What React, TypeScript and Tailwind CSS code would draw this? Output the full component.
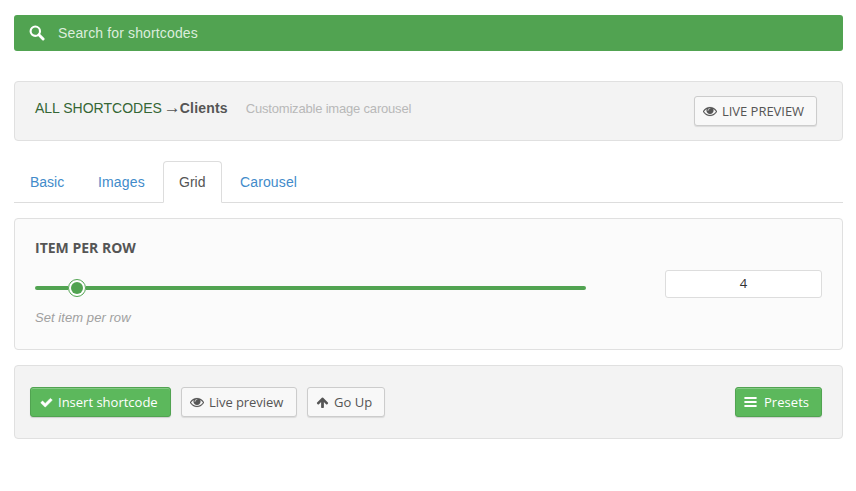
import React from "react";

const paths = {
  eye: "M1664 960q-152-236-381-353 61 104 61 225 0 185-131.5 316.5t-316.5 131.5-316.5-131.5-131.5-316.5q0-121 61-225-229 117-381 353 133 205 333.5 326.5t434.5 121.5 434.5-121.5 333.5-326.5zm-720-384q0-20-14-34t-34-14q-125 0-214.5 89.5t-89.5 214.5q0 20 14 34t34 14 34-14 14-34q0-86 61-147t147-61q20 0 34-14t14-34zm848 384q0 34-20 69-140 230-376.5 368.5t-499.5 138.5-499.5-139-376.5-368q-20-35-20-69t20-69q140-229 376.5-368t499.5-139 499.5 139 376.5 368q20 35 20 69z",
  check:
    "M1671 566q0 40-28 68l-724 724-136 136q-28 28-68 28t-68-28l-136-136-362-362q-28-28-28-68t28-68l136-136q28-28 68-28t68 28l294 295 656-657q28-28 68-28t68 28l136 136q28 28 28 68z",
  up: "M1675 971q0 51-37 90l-75 75q-38 38-91 38-54 0-90-38l-294-293v704q0 52-37.5 84.5t-90.5 32.5h-128q-53 0-90.5-32.5t-37.5-84.5v-704l-294 293q-36 38-90 38t-90-38l-75-75q-38-38-38-90 0-53 38-91l651-651q35-37 90-37 54 0 91 37l651 651q37 39 37 91z",
};

function Icon({ name, className = "" }: { name: keyof typeof paths; className?: string }) {
  return (
    <svg viewBox="0 0 1792 1792" fill="currentColor" stroke="currentColor" className={`shrink-0 ${className}`}>
      <path d={paths[name]} />
    </svg>
  );
}

function SearchIcon() {
  return (
    <svg viewBox="0 0 16 16" fill="none" stroke="currentColor" className="size-4 shrink-0">
      <circle cx="6.3" cy="6.2" r="4.7" strokeWidth="2.1" />
      <path d="M9.9 9.8L14.1 14" strokeWidth="2.9" strokeLinecap="round" />
    </svg>
  );
}

function BarsIcon() {
  return (
    <svg viewBox="0 0 13 14" fill="currentColor" className="mr-[7px] -ml-px h-[14px] w-[13px] shrink-0">
      <rect x="0.4" y="1.9" width="12.2" height="2.2" rx="0.5" />
      <rect x="0.4" y="5.9" width="12.2" height="2.2" rx="0.5" />
      <rect x="0.4" y="9.9" width="12.2" height="2.2" rx="0.5" />
    </svg>
  );
}

const buttonBase =
  "flex h-[30px] items-center rounded-[3px] border pl-[9px] font-['Open_Sans',sans-serif] text-[13px] whitespace-nowrap";
const plain = "border-[#ccc] bg-[#f8f8f8] text-[#555] shadow-[0_1px_1px_rgba(0,0,0,0.1)]";
const green =
  "border-[#51a351] bg-[#5cb85c] text-white shadow-[inset_0_1px_0_rgba(255,255,255,0.25),0_1px_1px_rgba(0,0,0,0.15)]";

export default function App() {
  return (
    <div className="h-[491px] w-[856px] bg-white pt-[15px] pr-[13px] pl-[14px] font-['Liberation_Sans',Arial,sans-serif] text-sm">
      <div className="flex h-9 items-center rounded-[3px] bg-[#51a351] pl-[15px] text-white">
        <SearchIcon />
        <span className="ml-[13px] tracking-[0.14px] text-[#dceddc]">Search for shortcodes</span>
      </div>

      <header className="mt-[30px] flex h-[60px] items-start rounded border border-[#e0e0e0] bg-[#f3f3f3] pt-[14px] pr-[25px] pl-5">
        <div className="flex pt-[2px] leading-5">
          <a className="text-[#356635]">ALL SHORTCODES</a>
          <span className="mr-[-1px] ml-[2px] w-[17px] font-['Liberation_Serif',serif] text-[17px] text-[#555]">→</span>
          <strong className="tracking-[0.18px] text-[#555]">Clients</strong>
          <span className="ml-[18px] pt-px text-[13px] tracking-[-0.19px] text-[#b8b8b8]">
            Customizable image carousel
          </span>
        </div>
        <button className={`${buttonBase} ${plain} ml-auto w-[123px]`}>
          <Icon name="eye" className="mr-[5px] -ml-px size-[14px] stroke-[20]" />
          <span className="tracking-[-0.03px]">LIVE PREVIEW</span>
        </button>
      </header>

      <nav className="mt-5 flex h-[42px] border-b border-[#ddd] leading-5 text-[#428bca]">
        <a className="w-[68px] pt-[11px] pl-4">Basic</a>
        <a className="w-[81px] pt-[11px] pl-4 tracking-[0.15px]">Images</a>
        <a className="h-[42px] w-[59px] rounded-t border border-b-white border-[#ddd] bg-white pt-[10px] pl-[15px] text-[#555]">
          Grid
        </a>
        <a className="pt-[11px] pl-[18px] tracking-[0.13px]">Carousel</a>
      </nav>

      <section className="mt-[15px] h-[132px] rounded border border-[#e0e0e0] bg-[#fbfbfb] px-5 pt-[19px]">
        <h2 className="font-['Open_Sans',sans-serif] text-[14px] leading-5 font-bold text-[#555]">ITEM PER ROW</h2>
        <div className="mt-3 flex h-7 items-center justify-between">
          <div className="mt-2 flex h-[18px] w-[551px] items-center">
            <div className="h-1 w-[33px] rounded-l-sm bg-[#51a351]" />
            <div className="flex size-[18px] items-center justify-center rounded-full border border-[#51a351] bg-white">
              <div className="size-3 rounded-full bg-[#51a351]" />
            </div>
            <div className="h-1 flex-1 rounded-r-sm bg-[#51a351]" />
          </div>
          <input
            readOnly
            value="4"
            className="h-7 w-[157px] rounded-[3px] border border-[#ddd] bg-white pb-[2px] text-center font-['Open_Sans',sans-serif] text-[13px] text-[#333]"
          />
        </div>
        <p className="mt-[10px] text-[13px] leading-5 tracking-[0.06px] text-[#a0a0a0] italic">Set item per row</p>
      </section>

      <footer className="mt-[15px] flex h-[74px] items-start gap-[10px] rounded border border-[#e0e0e0] bg-[#f3f3f3] pt-[21px] pr-5 pl-[15px]">
        <button className={`${buttonBase} ${green} w-[141px]`}>
          <Icon name="check" className="mr-[5px] size-[13px] stroke-[60]" />
          Insert shortcode
        </button>
        <button className={`${buttonBase} ${plain} w-[116px]`}>
          <Icon name="eye" className="mr-[5px] -ml-px size-[14px] stroke-[20]" />
          <span className="tracking-[-0.06px]">Live preview</span>
        </button>
        <button className={`${buttonBase} ${plain} w-[78px]`}>
          <Icon name="up" className="mr-[5px] -ml-px size-[13px]" />
          Go Up
        </button>
        <button className={`${buttonBase} ${green} ml-auto w-[87px]`}>
          <BarsIcon />
          <span className="tracking-[0.05px]">Presets</span>
        </button>
      </footer>
    </div>
  );
}
